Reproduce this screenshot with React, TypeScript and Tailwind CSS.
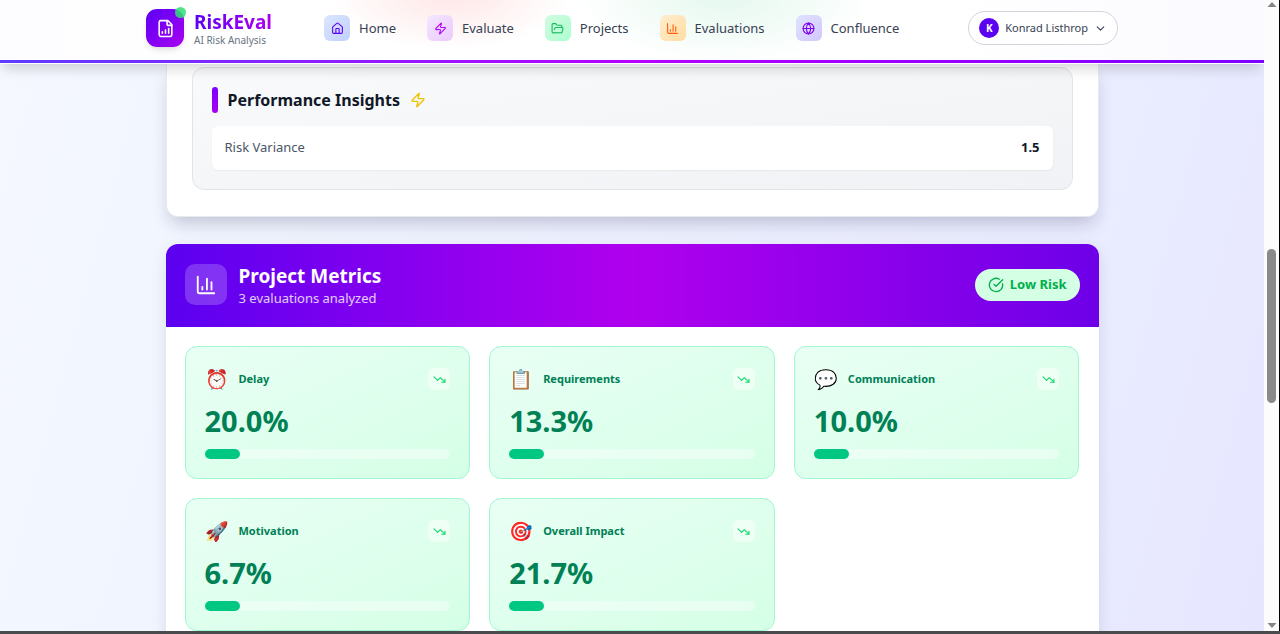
import React from "react";
import {
  ChartColumn,
  ChevronDown,
  CircleCheckBig,
  FileChartColumnIncreasing,
  FolderOpen,
  Globe,
  House,
  TrendingDown,
  Zap,
  type LucideIcon,
} from "lucide-react";

type NavItem = { label: string; icon: LucideIcon; tone: string };

const navItems: NavItem[] = [
  { label: "Home", icon: House, tone: "from-[#dbe6fe] to-[#c3d0ff] text-[#5b00f5]" },
  { label: "Evaluate", icon: Zap, tone: "from-[#f3e8ff] to-[#ecc8ff] text-[#b000f5]" },
  { label: "Projects", icon: FolderOpen, tone: "from-[#d0fae0] to-[#adffd0] text-[#12b85c]" },
  { label: "Evaluations", icon: ChartColumn, tone: "from-[#ffedd0] to-[#ffdda0] text-[#ff5a0a]" },
  { label: "Confluence", icon: Globe, tone: "from-[#e0e4ff] to-[#d2c6ff] text-[#7a00f0]" },
];

type Metric = { emoji: string; label: string; value: string };

const metrics: Metric[] = [
  { emoji: "⏰", label: "Delay", value: "20.0%" },
  { emoji: "📋", label: "Requirements", value: "13.3%" },
  { emoji: "💬", label: "Communication", value: "10.0%" },
  { emoji: "🚀", label: "Motivation", value: "6.7%" },
  { emoji: "🎯", label: "Overall Impact", value: "21.7%" },
];

function Header() {
  return (
    <header className="relative z-10 shrink-0 bg-white shadow-[0_8px_12px_-3px_rgba(0,0,0,0.16)]">
      <div className="bg-[radial-gradient(ellipse_120px_56px_at_450px_-6px,#ffe6e6,transparent),radial-gradient(ellipse_150px_70px_at_725px_-6px,#e4f8ee,transparent),linear-gradient(to_right,#fdfdff,#ffffff_20%,#ffffff_75%,#fafaff)]">
        <div className="mx-auto flex h-[60px] max-w-[972px] items-center pb-1">
          <a href="#top" className="mr-[52px] flex items-center gap-[10px]">
            <span className="relative flex size-[38px] items-center justify-center rounded-[11px] bg-linear-to-br/srgb from-[#5b00f5] to-[#a800f0] text-white shadow-md">
              <FileChartColumnIncreasing size={19} />
              <span className="absolute -top-[2px] -right-[2px] size-[11px] rounded-full bg-[#2fdf75]/85" />
            </span>
            <span className="flex flex-col">
              <span className="bg-linear-to-r/srgb from-[#5b00f5] to-[#b000f0] bg-clip-text text-[19px] leading-6 font-bold text-transparent">
                RiskEval
              </span>
              <span className="text-[10px] leading-3 text-[#6a7282]">AI Risk Analysis</span>
            </span>
          </a>
          <nav className="flex items-center gap-[31px]">
            {navItems.map(({ label, icon: Icon, tone }) => (
              <a key={label} href={`#${label.toLowerCase()}`} className="flex items-center gap-[9px]">
                <span className={`flex size-[26px] items-center justify-center rounded-md bg-gradient-to-br ${tone}`}>
                  <Icon size={13} />
                </span>
                <span className="text-[13px] leading-[19px] text-[#364153]">{label}</span>
              </a>
            ))}
          </nav>
          <button
            type="button"
            className="ml-auto flex h-[34px] items-center rounded-full border border-[#d1d5dc] bg-white px-[10px]"
          >
            <span className="flex size-5 items-center justify-center rounded-full bg-[#5b00f0] text-[10px] font-bold text-white">
              K
            </span>
            <span className="ml-[6px] text-[11px] text-[#364153]">Konrad Listhrop</span>
            <ChevronDown size={13} className="ml-[6px] text-[#364153]" />
          </button>
        </div>
      </div>
      <div className="h-[3px] bg-linear-to-r/srgb from-[#5f3cff] via-[#b800ff] to-[#7c00ff]" />
      <div className="h-px bg-white" />
    </header>
  );
}

function Insights() {
  return (
    <section className="rounded-b-xl border border-t-0 border-[#e8eaf0] bg-white px-[25px] pt-[3px] pb-[26px] shadow-[0_10px_18px_-4px_rgba(20,20,60,0.22)]">
      <div className="rounded-xl border border-[#e2e4ea] bg-gradient-to-br from-[#f9fafb] to-[#f1f2f5] p-[19px]">
        <div className="mb-[13px] flex items-center gap-[10px]">
          <span className="h-[26px] w-[6px] rounded-full bg-linear-to-b/srgb from-[#7c00ff] to-[#a800f0]" />
          <h3 className="text-[16px] leading-[26px] font-bold text-[#101828]">Performance Insights</h3>
          <Zap size={16} className="text-[#eec200]" />
        </div>
        <dl className="flex h-11 items-center justify-between rounded-md bg-white px-[13px] text-[13px] shadow-xs">
          <dt className="text-[#4a5565]">Risk Variance</dt>
          <dd className="font-bold text-[#101828]">1.5</dd>
        </dl>
      </div>
    </section>
  );
}

function MetricCard({ emoji, label, value }: Metric) {
  return (
    <article className="rounded-xl border border-[#a0f8d0] bg-gradient-to-br from-[#e9fff5] to-[#d5ffe6] p-[19px]">
      <div className="mb-[13px] flex h-[26px] items-center">
        <span className="w-6 text-[19px] leading-[26px]">{emoji}</span>
        <h3 className="ml-[10px] text-[11px] font-bold text-[#008055]">{label}</h3>
        <span className="ml-auto flex size-[22px] items-center justify-center rounded-md bg-white/50 text-[#12d868]">
          <TrendingDown size={13} />
        </span>
      </div>
      <p className="mb-3 text-[29px] leading-8 font-bold text-[#008055]">{value}</p>
      <div className="h-[10px] rounded-full bg-white/40">
        <div className="h-full w-1/7 rounded-full bg-[#00c883]" />
      </div>
    </article>
  );
}

function ProjectMetrics() {
  return (
    <section className="rounded-xl bg-white shadow-[0_4px_16px_rgba(20,20,60,0.10)]">
      <div className="flex h-[83px] items-center rounded-t-xl bg-linear-to-r/srgb from-[#5b00f0] via-[#b000ee] to-[#6d00e8] px-[19px] pb-[2px] text-white">
        <span className="flex h-[41px] w-[42px] items-center justify-center rounded-[10px] bg-white/20">
          <ChartColumn size={22} />
        </span>
        <div className="ml-3">
          <h2 className="text-[19px] leading-[26px] font-bold">Project Metrics</h2>
          <p className="text-[13px] leading-[18px] text-white/80">3 evaluations analyzed</p>
        </div>
        <span className="ml-auto flex h-8 items-center gap-[6px] rounded-full bg-[#d5ffe4] px-[13px] text-[13px] font-bold text-[#00b04c]">
          <CircleCheckBig size={16} />
          Low Risk
        </span>
      </div>
      <div className="grid grid-cols-3 gap-[19px] p-[19px]">
        {metrics.map((metric) => (
          <MetricCard key={metric.label} {...metric} />
        ))}
      </div>
    </section>
  );
}

function ScrollRail() {
  return (
    <div aria-hidden="true" className="flex w-4 shrink-0 flex-col items-center border-r border-black bg-[#fcfcfc]">
      <svg width="10" height="10" viewBox="0 0 10 10" className="shrink-0" fill="#858585">
        <path d="M5 2 L9.5 7 H0.5 Z" />
      </svg>
      <div className="grow-[239]" />
      <div className="w-[9px] grow-[154] rounded-full bg-[#8a8a8a]" />
      <div className="grow-[218]" />
      <svg width="10" height="10" viewBox="0 0 10 10" className="shrink-0" fill="#858585">
        <path d="M0.5 2 H9.5 L5 7 Z" />
      </svg>
    </div>
  );
}

export default function App() {
  return (
    <div className="flex h-screen flex-col overflow-hidden font-['Noto_Sans',sans-serif]">
      <div className="flex min-h-0 flex-1">
        <div className="flex min-w-0 flex-1 flex-col overflow-hidden bg-[linear-gradient(105deg,#f5f8ff,#f2f6ff_15%,#eaecff_80%,#e6e7ff)]">
          <Header />
          <main className="mx-auto flex w-full max-w-[933px] flex-col gap-[27px]">
            <Insights />
            <ProjectMetrics />
          </main>
        </div>
        <ScrollRail />
      </div>
      <div className="h-[3px] shrink-0 bg-[#4a4b4d]" />
    </div>
  );
}
